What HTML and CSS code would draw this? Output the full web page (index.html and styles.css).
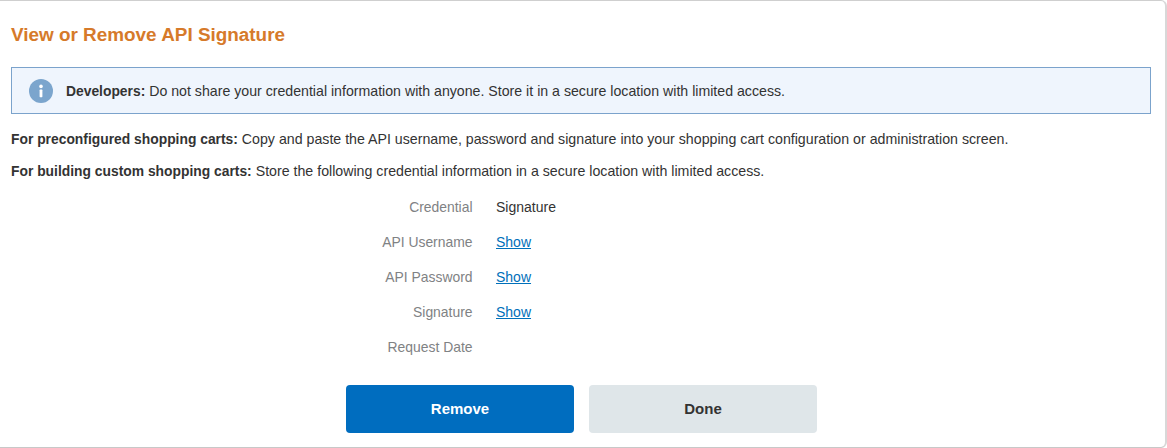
FILE: index.html
```html
<!DOCTYPE html>
<html lang="en">
<head>
<meta charset="utf-8">
<title>View or Remove API Signature</title>
<link rel="stylesheet" href="styles.css">
</head>
<body>
<main class="card">
  <h1 class="title">View or Remove API Signature</h1>
  <div class="notice">
    <svg class="notice-icon" width="24" height="24" viewBox="0 0 24 24" aria-hidden="true">
      <circle cx="12" cy="12" r="12" fill="#7ba5cd"/>
      <circle cx="12" cy="7.4" r="1.8" fill="#fff"/>
      <rect x="10.6" y="10.6" width="2.8" height="7.6" rx="0.6" fill="#fff"/>
    </svg>
    <p class="notice-text"><strong>Developers:</strong> Do not share your credential information with anyone. Store it in a secure location with limited access.</p>
  </div>
  <p class="para"><strong>For preconfigured shopping carts:</strong> Copy and paste the API username, password and signature into your shopping cart configuration or administration screen.</p>
  <p class="para para-second"><strong>For building custom shopping carts:</strong> Store the following credential information in a secure location with limited access.</p>
  <dl class="details">
    <dt>Credential</dt><dd>Signature</dd>
    <dt>API Username</dt><dd><a href="#">Show</a></dd>
    <dt>API Password</dt><dd><a href="#">Show</a></dd>
    <dt>Signature</dt><dd><a href="#">Show</a></dd>
    <dt>Request Date</dt><dd></dd>
  </dl>
  <div class="actions">
    <button class="btn btn-primary" type="button">Remove</button>
    <button class="btn btn-secondary" type="button">Done</button>
  </div>
</main>
</body>
</html>
```
FILE: styles.css
```css
html, body {
  margin: 0;
  padding: 0;
  background: #fff;
}
body {
  width: 1167px;
  height: 448px;
  overflow: hidden;
  font-family: "Liberation Sans", Arial, sans-serif;
  font-size: 14px;
  color: #333;
}
.card {
  box-sizing: border-box;
  width: 1167px;
  height: 448px;
  padding: 0 14px 0 11px;
  border-top: 1px solid #cfcfcf;
  border-right: 2px solid #d8d8d8;
  border-bottom: 1px solid #c8c8c8;
  border-top-right-radius: 6px;
  border-bottom-right-radius: 6px;
}
.title {
  margin: 23px 0 0;
  font-size: 18.9px;
  line-height: 22px;
  font-weight: 700;
  color: #d67a2a;
}
.notice {
  display: flex;
  align-items: center;
  gap: 13px;
  box-sizing: border-box;
  height: 47px;
  margin-top: 21px;
  padding-left: 17px;
  background: #eff5fd;
  border: 1px solid #7ba3cc;
}
.notice-text {
  margin: 0;
  font-size: 14.17px;
}
.para {
  margin: 16px 0 0;
  font-size: 14.19px;
  line-height: 18px;
}
.notice-text strong,
.para strong {
  font-size: 13.85px;
}
.para-second {
  margin-top: 14px;
}
.details {
  display: grid;
  grid-template-columns: 461.5px 1fr;
  grid-auto-rows: 35px;
  column-gap: 23.5px;
  margin: 10px 0 0;
  line-height: 35px;
}
.details dt {
  text-align: right;
  font-size: 13.9px;
  color: #7f8284;
}
.details dd {
  margin: 0;
}
.details a {
  color: #0070ba;
}
.actions {
  display: flex;
  justify-content: flex-start;
  gap: 15px;
  margin-top: 20px;
  padding-left: 335px;
}
.btn {
  width: 228px;
  height: 48px;
  padding: 0 0 2px;
  border: 0;
  border-radius: 4px;
  font-family: inherit;
  font-size: 15px;
  font-weight: 700;
}
.btn-primary {
  background: #006dbf;
  color: #fff;
}
.btn-secondary {
  background: #dfe6e9;
  color: #333;
}
```
